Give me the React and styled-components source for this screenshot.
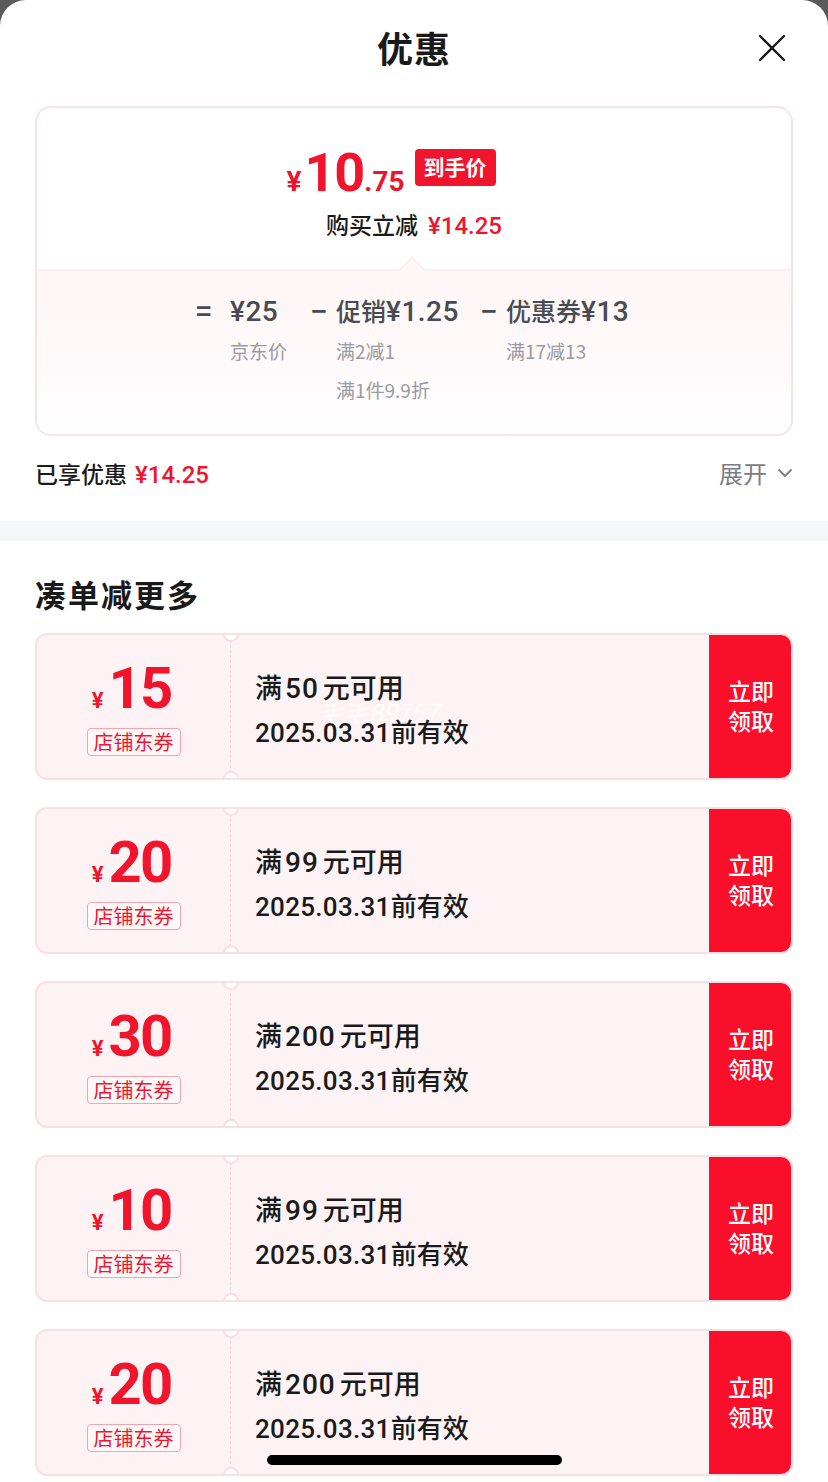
import React from "react";
import styled, { createGlobalStyle } from "styled-components";

const GlobalStyle = createGlobalStyle`
  html, body {
    margin: 0;
    padding: 0;
    background: #5a5a5a;
  }
  body {
    font-family: "Noto Sans CJK SC", "Noto Sans", sans-serif;
    color: #1a1a1a;
  }
  * { box-sizing: border-box; }
`;

const Sheet = styled.div`
  position: relative;
  width: 828px;
  height: 1482px;
  background: #fff;
  border-radius: 26px 26px 0 0;
  overflow: hidden;
`;

const Header = styled.div`
  height: 94px;
  display: flex;
  align-items: center;
  justify-content: center;
  position: relative;
  h1 {
    margin: 0;
    font-size: 36px;
    font-weight: 700;
    letter-spacing: 1px;
  }
`;

const Close = styled.button`
  position: absolute;
  right: 42px;
  top: 34px;
  width: 28px;
  height: 28px;
  padding: 0;
  border: none;
  background: none;
`;

const Panel = styled.div`
  margin: 12px 35px 0;
  height: 330px;
  border: 2px solid #f8e2e6;
  border-radius: 16px;
  overflow: hidden;
  display: flex;
  flex-direction: column;
`;

const PanelTop = styled.div`
  height: 163px;
  display: flex;
  flex-direction: column;
  align-items: center;
  padding-top: 38px;
  position: relative;
  border-bottom: 2px solid #fbeef0;
  &::after {
    content: "";
    position: absolute;
    left: 366px;
    bottom: -9px;
    width: 16px;
    height: 16px;
    background: #fef6f7;
    border-left: 2px solid #fbeef0;
    border-top: 2px solid #fbeef0;
    transform: rotate(45deg);
  }
`;

const PriceRow = styled.div`
  display: flex;
  align-items: center;
  gap: 10px;
  height: 52px;
  margin-right: 46px;
`;

const Price = styled.div`
  color: #f0142d;
  font-family: Roboto, "Liberation Sans", sans-serif;
  font-weight: 700;
  display: flex;
  align-items: baseline;
  .yen { font-size: 28px; margin-right: 3px; }
  .int { font-size: 54px; letter-spacing: -1px; }
  .dec { font-size: 28px; }
`;

const Badge = styled.span`
  background: #f0142d;
  color: #fff;
  font-size: 21px;
  font-weight: 700;
  padding: 2px 9px 4px;
  border-radius: 4px;
  line-height: 31px;
  margin-top: -10px;
`;

const Saved = styled.div`
  margin-top: 9px;
  font-size: 23px;
  font-weight: 500;
  color: #1a1a1a;
  span {
    color: #f0142d;
    margin-left: 10px;
    font-family: Roboto, "Liberation Sans", sans-serif;
    font-size: 24px;
    font-weight: 500;
  }
`;

const PanelBottom = styled.div`
  flex: 1;
  background: linear-gradient(#fef6f7 0%, #fef9fa 55%, #ffffff 100%);
  display: flex;
  justify-content: center;
  padding-top: 20px;
  padding-left: 4px;
`;

const Op = styled.div`
  font-size: 26px;
  font-weight: 700;
  color: #4a4a52;
  line-height: 38px;
  width: ${p => p.w}px;
  text-align: ${p => p.align || "center"};
`;

const Item = styled.div`
  display: flex;
  flex-direction: column;
  width: ${p => p.w}px;
`;

const ItemValue = styled.div`
  font-size: 25px;
  font-weight: 500;
  color: #4a4a52;
  line-height: 38px;
  white-space: nowrap;
  b {
    font-family: Roboto, "Liberation Sans", sans-serif;
    font-weight: 500;
    font-size: 28px;
    letter-spacing: 0.5px;
  }
`;

const ItemSub = styled.div`
  font-size: 19px;
  color: #9a9aa0;
  line-height: 39px;
  white-space: nowrap;
  &:first-of-type { margin-top: 4px; }
`;

const SummaryRow = styled.div`
  height: 85px;
  margin: 0 35px;
  display: flex;
  align-items: center;
  justify-content: space-between;
  padding-bottom: 12px;
`;

const SummaryLeft = styled.div`
  font-size: 23px;
  font-weight: 500;
  span {
    color: #f0142d;
    margin-left: 8px;
    font-family: Roboto, "Liberation Sans", sans-serif;
    font-size: 24px;
  }
`;

const Expand = styled.div`
  display: flex;
  align-items: center;
  gap: 10px;
  color: #7c7c82;
  font-size: 24px;
`;

const Band = styled.div`
  height: 20px;
  background: #f5f6f8;
`;

const SectionTitle = styled.h2`
  margin: 32px 35px 0;
  font-size: 31px;
  font-weight: 700;
  line-height: 42px;
  letter-spacing: 2px;
`;

const CouponList = styled.div`
  margin: 18px 35px 0;
  display: flex;
  flex-direction: column;
  gap: 27px;
`;

const Coupon = styled.div`
  position: relative;
  height: 147px;
  display: flex;
  background: #fdf3f4;
  border: 2px solid #f8dfe3;
  border-radius: 12px;
  overflow: hidden;
`;

const Notch = styled.span`
  position: absolute;
  left: 186px;
  ${p => (p.bottom ? "bottom: -9px;" : "top: -9px;")}
  width: 16px;
  height: 16px;
  border-radius: 50%;
  background: #fff;
  border: 2px solid #f8dfe3;
`;

const CouponLeft = styled.div`
  width: 194px;
  display: flex;
  flex-direction: column;
  align-items: center;
  justify-content: center;
  border-right: 1.5px dashed #f3d2d8;
  padding-top: 4px;
`;

const Amount = styled.div`
  color: #f0142d;
  font-family: Roboto, "Liberation Sans", sans-serif;
  font-weight: 700;
  display: flex;
  align-items: baseline;
  line-height: 54px;
  margin-right: 4px;
  .yen { font-size: 22px; margin-right: 5px; }
  .num { font-size: 58px; letter-spacing: -2px; }
`;

const Tag = styled.span`
  margin-top: 0;
  border: 1.5px solid #f1a3ae;
  border-radius: 4px;
  color: #f0142d;
  font-size: 20px;
  line-height: 26px;
  padding: 0 6px;
  background: #fff8f9;
`;

const CouponBody = styled.div`
  flex: 1;
  display: flex;
  flex-direction: column;
  justify-content: center;
  padding-left: 24px;
  padding-top: 4px;
  position: relative;
`;

const Rule = styled.div`
  font-size: 27px;
  font-weight: 500;
  line-height: 36px;
  b {
    font-family: Roboto, "Liberation Sans", sans-serif;
    font-size: 28px;
    font-weight: 500;
    margin: 0 4px 0 3px;
    letter-spacing: 1px;
  }
`;

const Expire = styled.div`
  margin-top: 8px;
  font-size: 26px;
  font-weight: 500;
  line-height: 32px;
  span {
    font-family: Roboto, "Liberation Sans", sans-serif;
    font-weight: 500;
    font-size: 26px;
    letter-spacing: 0.3px;
  }
`;

const Watermark = styled.span`
  position: absolute;
  left: 88px;
  top: 58px;
  font-size: 25px;
  color: rgba(255, 255, 255, 0.6);
  font-style: italic;
  pointer-events: none;
`;

const GetButton = styled.button`
  width: 84px;
  margin: -2px -2px -2px 0;
  border: none;
  background: #fa0f2a;
  color: #fff;
  font-family: "Noto Sans CJK SC", sans-serif;
  font-size: 23px;
  font-weight: 500;
  line-height: 30px;
  padding: 0 0 4px;
  border-radius: 0 12px 12px 0;
`;

const HomeBar = styled.div`
  position: absolute;
  left: 267px;
  bottom: 17px;
  width: 295px;
  height: 10px;
  border-radius: 5px;
  background: #000;
`;

const coupons = [
  { amount: 15, min: 50, mark: true },
  { amount: 20, min: 99 },
  { amount: 30, min: 200 },
  { amount: 10, min: 99 },
  { amount: 20, min: 200 },
];

function CouponCard({ amount, min, mark }) {
  return (
    <Coupon>
      <Notch />
      <Notch bottom />
      <CouponLeft>
        <Amount>
          <span className="yen">¥</span>
          <span className="num">{amount}</span>
        </Amount>
        <Tag>店铺东券</Tag>
      </CouponLeft>
      <CouponBody>
        <Rule>满<b>{min}</b>元可用</Rule>
        <Expire><span>2025.03.31</span>前有效</Expire>
        {mark && <Watermark>毛毛89757</Watermark>}
      </CouponBody>
      <GetButton>立即<br />领取</GetButton>
    </Coupon>
  );
}

export default function App() {
  return (
    <>
      <GlobalStyle />
      <Sheet>
        <Header>
          <h1>优惠</h1>
          <Close aria-label="关闭">
            <svg width="28" height="28" viewBox="0 0 28 28">
              <path d="M2 2 L26 26 M26 2 L2 26" stroke="#1a1a1a" strokeWidth="2.4" strokeLinecap="round" />
            </svg>
          </Close>
        </Header>

        <Panel>
          <PanelTop>
            <PriceRow>
              <Price>
                <span className="yen">¥</span>
                <span className="int">10</span>
                <span className="dec">.75</span>
              </Price>
              <Badge>到手价</Badge>
            </PriceRow>
            <Saved>购买立减<span>¥14.25</span></Saved>
          </PanelTop>
          <PanelBottom>
            <Op w={34} align="left">=</Op>
            <Item w={72}>
              <ItemValue><b>¥25</b></ItemValue>
              <ItemSub>京东价</ItemSub>
            </Item>
            <Op w={34}>−</Op>
            <Item w={136}>
              <ItemValue>促销<b>¥1.25</b></ItemValue>
              <ItemSub>满2减1</ItemSub>
              <ItemSub>满1件9.9折</ItemSub>
            </Item>
            <Op w={34}>−</Op>
            <Item w={130}>
              <ItemValue>优惠券<b>¥13</b></ItemValue>
              <ItemSub>满17减13</ItemSub>
            </Item>
          </PanelBottom>
        </Panel>

        <SummaryRow>
          <SummaryLeft>已享优惠<span>¥14.25</span></SummaryLeft>
          <Expand>
            展开
            <svg width="16" height="10" viewBox="0 0 16 10">
              <path d="M2 2 L8 8 L14 2" fill="none" stroke="#7c7c82" strokeWidth="1.8" strokeLinecap="round" strokeLinejoin="round" />
            </svg>
          </Expand>
        </SummaryRow>

        <Band />

        <SectionTitle>凑单减更多</SectionTitle>
        <CouponList>
          {coupons.map((c, i) => (
            <CouponCard key={i} {...c} />
          ))}
        </CouponList>

        <HomeBar />
      </Sheet>
    </>
  );
}
